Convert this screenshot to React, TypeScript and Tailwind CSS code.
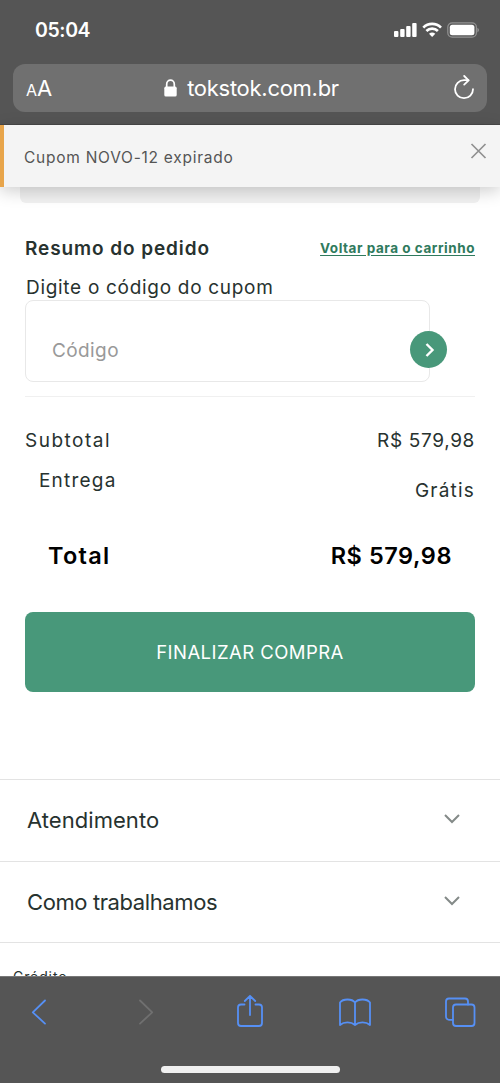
function StatusBar() {
  return (
    <div className="flex h-[60px] items-center justify-between pl-[35px] pr-[21px]">
      <span className="text-[19.5px] leading-[60px] font-semibold tracking-[-0.4px]">05:04</span>
      <svg width="86" height="16" viewBox="0 0 86 16" fill="#fff">
        <rect x="1" y="9" width="4.4" height="6" rx="1" />
        <rect x="7.2" y="7" width="4.4" height="8" rx="1" />
        <rect x="13.2" y="4" width="4.4" height="11" rx="1" />
        <rect x="19.2" y="1" width="4.4" height="14" rx="1" />
        <g fill="none" stroke="#fff" strokeWidth="2.7">
          <path d="M30.3 5.6A12.5 12.5 0 0 1 48 5.6" />
          <path d="M33.4 9A8.2 8.2 0 0 1 44.9 9" />
        </g>
        <path d="M36 11.8A4.8 4.8 0 0 1 42.3 11.8L39.15 15Z" />
        <rect x="54.8" y="0.9" width="28.6" height="14.2" rx="4.3" fill="none" stroke="#929292" strokeWidth="1.2" />
        <rect x="56.8" y="2.8" width="24.6" height="10.4" rx="2.5" />
        <path d="M84.4 5.8Q86 6.5 86 8T84.4 10.4Z" fill="#929292" />
      </svg>
    </div>
  );
}

function AddressBar() {
  return (
    <div className="mx-[13px] mt-[4px] grid h-[48px] grid-cols-[80px_1fr_80px] items-center rounded-[12px] bg-[#707070]">
      <div className="flex items-baseline pl-[13px] pt-[2px]">
        <span className="text-[16px] leading-[30px]">A</span>
        <span className="text-[22px] leading-[30px]">A</span>
      </div>
      <div className="flex items-center justify-center gap-[10px] pl-[3px]">
        <svg width="13" height="18" viewBox="0 0 13 18">
          <rect x="0.3" y="7.6" width="12.4" height="10" rx="1.6" fill="#fff" />
          <path d="M2.7 8.4V5.2a3.8 4.1 0 0 1 7.6 0v3.2" fill="none" stroke="#fff" strokeWidth="1.7" />
        </svg>
        <span className="text-[22px] leading-[30px] tracking-[-0.28px]">tokstok.com.br</span>
      </div>
      <svg className="ml-auto mr-[12px]" width="22" height="26" viewBox="0 0 22 26" fill="none" stroke="#fff" strokeWidth="1.8" strokeLinecap="round" strokeLinejoin="round">
        <path d="M20 14.2A9 9 0 1 1 11 5.2h4.4" />
        <path d="M11.2 1l4.4 4.3-4.4 4.3" />
      </svg>
    </div>
  );
}

function Row({ label, tracking }: { label: string; tracking: string }) {
  return (
    <div className="flex h-[81.5px] items-center justify-between border-t border-[#e3e3e3] pl-[27px] pr-[40px]">
      <span className={`text-[22px] leading-[30px] ${tracking}`}>{label}</span>
      <svg className="mb-[2px]" width="16" height="10" viewBox="0 0 16 10" fill="none" stroke="#848a88" strokeWidth="2">
        <path d="M1 1l7 7 7-7" />
      </svg>
    </div>
  );
}

export default function App() {
  return (
    <div className="flex h-[1083px] w-[500px] flex-col overflow-hidden bg-white font-['Inter',sans-serif] text-[#27322f]">
      <header className="h-[125px] shrink-0 border-b border-[#484848] bg-[#555] text-white">
        <StatusBar />
        <AddressBar />
      </header>

      <div className="relative z-10 flex h-[62px] shrink-0 justify-between border-l-4 border-[#e8a54b] bg-[#f4f4f4] shadow-[0_4px_16px_rgba(0,0,0,0.2)]">
        <span className="pl-[20px] text-[15.5px] leading-[65px] tracking-[0.74px] text-[#555]">Cupom NOVO-12 expirado</span>
        <svg className="mr-[13px] mt-[18px]" width="17" height="16" viewBox="0 0 17 16" stroke="#909090" strokeWidth="1.7" fill="none">
          <path d="M1.5 1l14 14M15.5 1l-14 14" />
        </svg>
      </div>

      <main className="h-[789px] shrink-0 overflow-hidden">
        <div className="mx-[20px] h-[16px] rounded-b-[6px] bg-[#f1f1f1]" />
        <section className="px-[25px] pt-[30px]">
          <div className="flex h-[30px] items-center justify-between">
            <h2 className="pt-[2px] text-[19px] leading-[30px] font-semibold tracking-[0.9px]">Resumo do pedido</h2>
            <a className="text-[13.5px] leading-[28px] font-bold tracking-[0.54px] text-[#2f7a5d] underline underline-offset-2">Voltar para o carrinho</a>
          </div>
          <p className="mt-[9px] h-[28px] pl-[1px] text-[19px] leading-[31px] tracking-[0.7px]">Digite o código do cupom</p>
          <div className="flex h-[82px] items-center">
            <div className="h-[82px] w-[405px] shrink-0 rounded-[8px] border-[1.5px] border-[#e8e8e8] pt-[35px] pl-[26px] text-[19px] leading-[30px] tracking-[0.4px] text-[#999]">Código</div>
            <button className="z-10 mt-[17px] ml-[-20px] flex size-[37px] shrink-0 items-center justify-center rounded-full bg-[#48987a]">
              <svg width="10" height="14" viewBox="0 0 10 14" fill="none" stroke="#fff" strokeWidth="2.4" className="ml-[3px]">
                <path d="M1.5 1l6 6-6 6" />
              </svg>
            </button>
          </div>
          <div className="mt-[14px] h-px bg-[#f0f0f0]" />
          <div className="mt-[29px] flex justify-between text-[19px] leading-[30px]">
            <span className="tracking-[1.5px]">Subtotal</span>
            <span className="tracking-[0.65px]">R$ 579,98</span>
          </div>
          <div className="mt-[10px] flex h-[40px] justify-between pl-[14px] text-[19px] leading-[30px] tracking-[1.2px]">
            <span>Entrega</span>
            <span className="pt-[10px]">Grátis</span>
          </div>
          <div className="mt-[34px] flex justify-between pr-[23px] pl-[23px] text-[23.5px] leading-[32px] font-semibold text-black">
            <span className="tracking-[1.3px]">Total</span>
            <span className="tracking-[0.55px]">R$ 579,98</span>
          </div>
          <button className="mt-[40px] block h-[80px] w-[450px] rounded-[8px] bg-[#48987a] text-center text-[18.5px] leading-[80px] tracking-[0.45px] text-white">FINALIZAR COMPRA</button>
        </section>
        <section className="mt-[87px] border-b border-[#e3e3e3]">
          <Row label="Atendimento" tracking="tracking-[0.05px]" />
          <Row label="Como trabalhamos" tracking="tracking-[-0.4px]" />
        </section>
        <p className="mt-[24px] pl-[13px] text-[14px] leading-[20px] tracking-[0.9px]">Crédito</p>
      </main>

      <footer className="flex h-[107px] shrink-0 flex-col items-center justify-between border-t border-[#777] bg-[#555] pb-[10.5px]">
        <svg width="500" height="70" viewBox="0 977 500 70" fill="none" stroke="#5690f5" strokeWidth="1.8" strokeLinecap="round" strokeLinejoin="round">
          <path d="M45 1000.5L32.8 1012.3L45 1023.6" />
          <path d="M140 1000.5L152.2 1012.3L140 1023.6" stroke="#707070" />
          <path d="M244.5 1004.5H241a3 3 0 0 0-3 3V1023a3 3 0 0 0 3 3h18a3 3 0 0 0 3-3V1007.5a3 3 0 0 0-3-3h-3.5M250 1015V996M244.8 1001l5.2-5.2 5.2 5.2" />
          <path d="M355 1002.5C352 998.5 343 998.5 340 1002.5V1025C344 1021.5 351 1021.5 355 1025C359 1021.5 366 1021.5 370 1025V1002.5C367 998.5 358 998.5 355 1002.5V1025" />
          <rect x="453" y="1004.5" width="21.5" height="21.5" rx="3" />
          <path d="M453 1019.8h-4a3 3 0 0 1-3-3V1001.5a3 3 0 0 1 3-3h16a3 3 0 0 1 3 3v3" />
        </svg>
        <div className="h-[7px] w-[179px] rounded-full bg-[#f0f0f0]" />
      </footer>
    </div>
  );
}
